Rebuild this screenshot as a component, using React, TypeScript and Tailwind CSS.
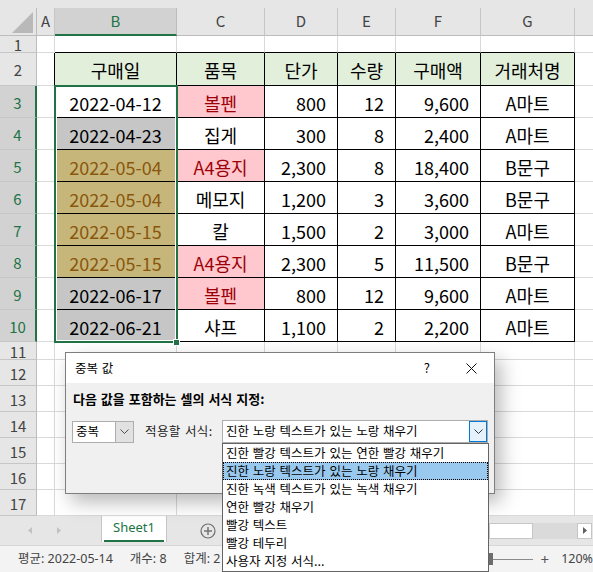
import React from "react";

type Fill = "w" | "g" | "y" | "p" | "";

interface DataRow {
	date: string;
	dateFill: Fill;
	item: string;
	itemFill: Fill;
	price: string;
	qty: string;
	total: string;
	shop: string;
}

const COL_LETTERS = ["A", "B", "C", "D", "E", "F", "G", ""];

const HEADERS = ["", "구매일", "품목", "단가", "수량", "구매액", "거래처명", ""];

const DATA: DataRow[] = [
	{ date: "2022-04-12", dateFill: "w", item: "볼펜", itemFill: "p", price: "800", qty: "12", total: "9,600", shop: "A마트" },
	{ date: "2022-04-23", dateFill: "g", item: "집게", itemFill: "", price: "300", qty: "8", total: "2,400", shop: "A마트" },
	{ date: "2022-05-04", dateFill: "y", item: "A4용지", itemFill: "p", price: "2,300", qty: "8", total: "18,400", shop: "B문구" },
	{ date: "2022-05-04", dateFill: "y", item: "메모지", itemFill: "", price: "1,200", qty: "3", total: "3,600", shop: "B문구" },
	{ date: "2022-05-15", dateFill: "y", item: "칼", itemFill: "", price: "1,500", qty: "2", total: "3,000", shop: "A마트" },
	{ date: "2022-05-15", dateFill: "y", item: "A4용지", itemFill: "p", price: "2,300", qty: "5", total: "11,500", shop: "B문구" },
	{ date: "2022-06-17", dateFill: "g", item: "볼펜", itemFill: "p", price: "800", qty: "12", total: "9,600", shop: "A마트" },
	{ date: "2022-06-21", dateFill: "g", item: "샤프", itemFill: "", price: "1,100", qty: "2", total: "2,200", shop: "A마트" },
];

const ROW_HEIGHTS: Record<number, string> = {
	1: "h-[17px]",
	2: "h-[33px]",
	11: "h-[18px]",
};

const rowHeight = (r: number) => ROW_HEIGHTS[r] ?? (r <= 10 ? "h-[32px]" : "h-[26px]");

const FORMATS = [
	"진한 빨강 텍스트가 있는 연한 빨강 채우기",
	"진한 노랑 텍스트가 있는 노랑 채우기",
	"진한 녹색 텍스트가 있는 녹색 채우기",
	"연한 빨강 채우기",
	"빨강 텍스트",
	"빨강 테두리",
	"사용자 지정 서식...",
];

const Chevron = ({ color = "#505050" }: { color?: string }) => (
	<svg width="9" height="5" viewBox="0 0 9 5">
		<polyline points="0.5,0.5 4.5,4.5 8.5,0.5" fill="none" stroke={color} strokeWidth="1" />
	</svg>
);

const fillClass = (f: Fill) => {
	if (f === "g") return "bg-[#c6c6c6] text-black";
	if (f === "y") return "bg-[#c6b679] text-[#8a560e]";
	if (f === "p") return "bg-[#ffc7ce] text-[#9c0006]";
	return "bg-white text-black";
};

const cellValues = (r: number): { text: string; fill: Fill }[] => {
	if (r === 2) return HEADERS.map((t) => ({ text: t, fill: "" as Fill }));
	if (r >= 3 && r <= 10) {
		const d = DATA[r - 3];
		return [
			{ text: "", fill: "" },
			{ text: d.date, fill: d.dateFill },
			{ text: d.item, fill: d.itemFill },
			{ text: d.price, fill: "" },
			{ text: d.qty, fill: "" },
			{ text: d.total, fill: "" },
			{ text: d.shop, fill: "" },
			{ text: "", fill: "" },
		];
	}
	return COL_LETTERS.map(() => ({ text: "", fill: "" as Fill }));
};

const Cell = ({ r, c, text, fill }: { r: number; c: number; text: string; fill: Fill }) => {
	const rightBlack = r >= 2 && r <= 10 && c <= 6;
	const bottomBlack = c >= 1 && c <= 6 && r >= 1 && r <= 10;
	const right = c === 7 ? "" : rightBlack ? "border-r border-r-black" : "border-r border-r-[#d9d9d9]";
	const bottom = bottomBlack ? "border-b border-b-black" : "border-b border-b-[#d9d9d9]";
	const bg = r === 2 && c >= 1 && c <= 6 ? "bg-[#e2efda] text-black" : fillClass(fill);
	const align = c >= 3 && c <= 5 && r > 2 ? "justify-end pr-[11px]" : "justify-center";
	return (
		<div className={`flex items-center pt-[3px] whitespace-nowrap ${right} ${bottom} ${bg} ${align}`}>
			{text}
		</div>
	);
};

const Sheet = () => {
	const rows = Array.from({ length: 17 }, (_, i) => i + 1);
	return (
		<div className="grid grid-cols-[37px_18px_122px_88px_73px_58px_85px_94px_18px]">
			{/* column headers */}
			<div className="h-[28px] bg-[#e6e6e6] border-r border-b border-[#bcbcbc] flex items-end justify-end pr-[3px] pb-[2px]">
				<svg width="21" height="21" viewBox="0 0 21 21">
					<polygon points="21,0 21,21 0,21" fill="#b9b9b9" />
				</svg>
			</div>
			{COL_LETTERS.map((l, i) =>
				i === 1 ? (
					<div
						key={l}
						className="h-[28px] bg-[#d2d2d2] text-[#217346] border-r border-r-[#bcbcbc] border-b-2 border-b-[#217346] flex items-center justify-center text-[15px]"
					>
						{l}
					</div>
				) : (
					<div
						key={`h${i}`}
						className={`h-[28px] bg-[#e6e6e6] text-[#444] border-b border-b-[#bcbcbc] flex items-center justify-center text-[15px] ${i === 7 ? "" : "border-r border-r-[#c6c6c6]"}`}
					>
						{l}
					</div>
				),
			)}
			{rows.map((r) => {
				const sel = r >= 3 && r <= 10;
				return (
					<React.Fragment key={r}>
						<div
							className={`${rowHeight(r)} flex items-center justify-center pt-[3px] text-[15px] border-b border-b-[#c6c6c6] ${
								sel
									? "bg-[#d2d2d2] text-[#217346] border-r-2 border-r-[#217346]"
									: "bg-[#e6e6e6] text-[#444] border-r border-r-[#bcbcbc]"
							}`}
						>
							{r}
						</div>
						{cellValues(r).map((v, c) => (
							<div key={c} className={`${rowHeight(r)} grid`}>
								<Cell r={r} c={c} text={v.text} fill={v.fill} />
							</div>
						))}
					</React.Fragment>
				);
			})}
		</div>
	);
};

const TabBar = () => (
	<div className="h-[29px] flex bg-[#e6e6e6] font-['Noto_Sans','Noto_Sans_CJK_KR',sans-serif]">
		<div className="w-[101px] flex items-center pl-[28px] gap-[25px]">
			<svg width="4" height="7" viewBox="0 0 4 7">
				<polygon points="4,0 4,7 0,3.5" fill="#c2c2c2" />
			</svg>
			<svg width="4" height="7" viewBox="0 0 4 7">
				<polygon points="0,0 0,7 4,3.5" fill="#c2c2c2" />
			</svg>
		</div>
		<div className="w-[66px] h-[26px] bg-white border-x border-[#c6c6c6] flex flex-col">
			<div className="flex-1 flex items-center justify-center text-[13px] text-[#217346]">Sheet1</div>
			<div className="h-[2px] mx-[2px] bg-[#217346]" />
		</div>
		<div className="ml-[33px] flex items-center">
			<svg width="16" height="16" viewBox="0 0 16 16">
				<circle cx="8" cy="8" r="7" fill="none" stroke="#6d6d6d" strokeWidth="1.2" />
				<line x1="4" y1="8" x2="12" y2="8" stroke="#6d6d6d" strokeWidth="1.4" />
				<line x1="8" y1="4" x2="8" y2="12" stroke="#6d6d6d" strokeWidth="1.4" />
			</svg>
		</div>
		<div className="ml-auto w-[104px] flex items-center">
			<div className="w-[44px] h-[16px] bg-white border border-[#c6c6c6]" />
			<div className="w-[44px] h-[16px] bg-[#dadada]" />
			<div className="w-[15px] h-[16px] bg-white border border-[#c6c6c6] flex items-center justify-center">
				<svg width="4" height="7" viewBox="0 0 4 7">
					<polygon points="0,0 0,7 4,3.5" fill="#606060" />
				</svg>
			</div>
		</div>
	</div>
);

const StatusBar = () => (
	<div className="h-[27px] flex items-center bg-[#f3f3f3] border-t border-[#d6d6d6] text-[12.5px] text-[#444] whitespace-nowrap overflow-hidden font-['Noto_Sans','Noto_Sans_CJK_KR',sans-serif]">
		<div className="w-[222px] shrink-0 overflow-hidden pl-[18px] flex gap-[17px]">
			<span>평균: 2022-05-14</span>
			<span>개수: 8</span>
			<span>합계: 2</span>
		</div>
		<div className="ml-auto w-[105px] shrink-0 flex items-center">
			<div className="w-[6px] h-[12px] bg-[#6d6d6d]" />
			<div className="w-[44px] h-px bg-[#8a8a8a]" />
			<span className="ml-[8px] text-[15px] leading-none text-[#555]">+</span>
			<span className="ml-[12px]">120%</span>
		</div>
	</div>
);

const Dialog = () => (
	<div className="absolute left-[65px] top-[352px] w-[430px] h-[142px] border border-[#7e7e7e] bg-[#f0f0f0] shadow-[6px_8px_18px_rgba(0,0,0,0.28)] text-[12.5px] [word-spacing:1px] text-black">
		<div className="h-[30px] bg-white flex items-center pl-[9px]">
			<span>중복 값</span>
			<span className="ml-auto text-[13px]">?</span>
			<svg className="ml-[36px] mr-[17px]" width="11" height="11" viewBox="0 0 11 11">
				<line x1="0.5" y1="0.5" x2="10.5" y2="10.5" stroke="#111" strokeWidth="1" />
				<line x1="10.5" y1="0.5" x2="0.5" y2="10.5" stroke="#111" strokeWidth="1" />
			</svg>
		</div>
		<div className="pl-[6px] pr-[6px] pt-[8px]">
			<div className="pl-[1px] font-bold text-[13px] leading-[16px]">다음 값을 포함하는 셀의 서식 지정:</div>
			<div className="mt-[13px] flex items-center h-[23px]">
				<div className="w-[62px] h-[22px] bg-white border border-[#adadad] flex items-center">
					<span className="pl-[3px] flex-1">중복</span>
					<div className="w-[18px] h-[20px] bg-[#e1e1e1] border-l border-[#adadad] flex items-center justify-center">
						<Chevron />
					</div>
				</div>
				<span className="ml-[11px] text-[#222] tracking-[0.4px]">적용할 서식:</span>
				<div className="ml-auto w-[266px] h-[23px] bg-white border border-[#adadad] flex items-center">
					<span className="pl-[3px] flex-1 whitespace-nowrap">진한 노랑 텍스트가 있는 노랑 채우기</span>
					<div className="w-[18px] h-[21px] bg-[#e5f1fb] border border-[#0078d7] flex items-center justify-center">
						<Chevron color="#333" />
					</div>
				</div>
			</div>
		</div>
	</div>
);

const FormatList = () => (
	<div className="absolute left-[222px] top-[443px] w-[267px] h-[129px] bg-white border border-[#646464] text-[12.5px] [word-spacing:1px] text-black">
		{FORMATS.map((f, i) => (
			<div
				key={f}
				className={`h-[18px] flex items-center pl-[3px] whitespace-nowrap ${
					i === 1 ? "bg-[#99c9ef] outline outline-1 outline-dotted outline-black -outline-offset-1" : ""
				}`}
			>
				{f}
			</div>
		))}
	</div>
);

export default function App() {
	return (
		<div className="relative w-[593px] h-[572px] overflow-hidden bg-white font-['Noto_Sans_CJK_KR','Noto_Sans',sans-serif] text-[18px]">
			<div className="h-[8px] bg-[#e6e6e6]" />
			<Sheet />
			<TabBar />
			<StatusBar />

			{/* selection outline B3:B10 */}
			<div className="absolute left-[54px] top-[85px] w-[124px] h-[258px] border-2 border-[#217346] shadow-[inset_0_0_0_1px_#ffffff] pointer-events-none" />
			<div className="absolute left-[173px] top-[339px] w-[7px] h-[7px] bg-[#217346] border border-white" />

			<div className="font-['Noto_Sans_CJK_KR',sans-serif]">
				<Dialog />
				<FormatList />
			</div>
		</div>
	);
}
